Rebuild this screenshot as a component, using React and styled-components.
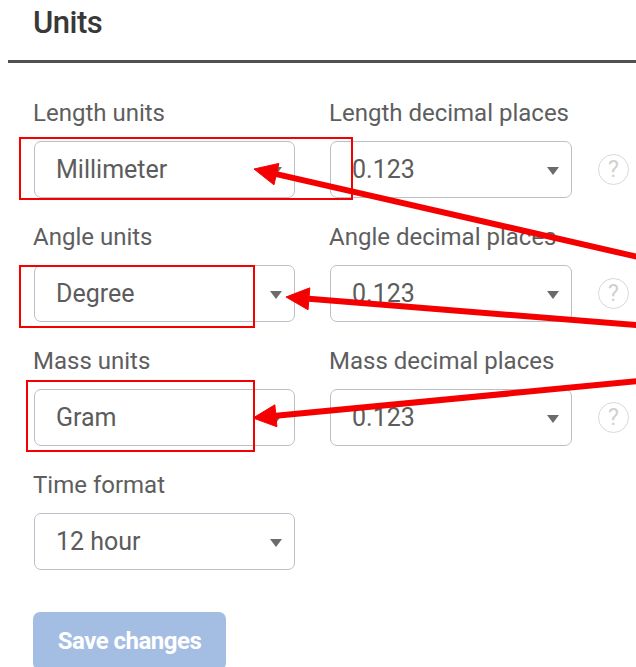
import React from 'react';
import styled, { createGlobalStyle } from 'styled-components';

const GlobalStyle = createGlobalStyle`
  html, body {
    margin: 0;
    padding: 0;
    background: #ffffff;
  }
  body {
    font-family: Roboto, "Liberation Sans", sans-serif;
  }
`;

const fields = [
  { label: 'Length units', value: 'Millimeter', decimalLabel: 'Length decimal places', decimal: '0.123' },
  { label: 'Angle units', value: 'Degree', decimalLabel: 'Angle decimal places', decimal: '0.123' },
  { label: 'Mass units', value: 'Gram', decimalLabel: 'Mass decimal places', decimal: '0.123' },
  { label: 'Time format', value: '12 hour' },
];

// callout marks drawn over the form
const boxes = [
  { x: 20, y: 138, w: 332, h: 61 },
  { x: 20, y: 266, w: 234, h: 61 },
  { x: 27, y: 381, w: 227, h: 70 },
];

const arrows = [
  { tip: [254, 169], tail: [660, 262] },
  { tip: [286, 297], tail: [660, 327] },
  { tip: [253, 418], tail: [660, 379] },
];

const arrowHead = (tip, tail, len = 23, half = 11) => {
  const dx = tail[0] - tip[0];
  const dy = tail[1] - tip[1];
  const d = Math.hypot(dx, dy);
  const ux = dx / d;
  const uy = dy / d;
  const bx = tip[0] + ux * len;
  const by = tip[1] + uy * len;
  return {
    base: [bx, by],
    points: `${tip[0]},${tip[1]} ${bx - uy * half},${by + ux * half} ${bx + uy * half},${by - ux * half}`,
  };
};

const Units = () => {
  return (
    <Page>
      <GlobalStyle />
      <Header>
        <Title>Units</Title>
      </Header>
      <Form>
        {fields.map((f) => (
          <React.Fragment key={f.label}>
            <Field>
              <Label>{f.label}</Label>
              <Select $width={261}>{f.value}</Select>
            </Field>
            {f.decimal ? (
              <>
                <Field>
                  <Label>{f.decimalLabel}</Label>
                  <Select $width={242}>{f.decimal}</Select>
                </Field>
                <Help>?</Help>
              </>
            ) : (
              <>
                <div />
                <div />
              </>
            )}
          </React.Fragment>
        ))}
      </Form>
      <SaveButton>Save changes</SaveButton>

      <Marks width="636" height="667" viewBox="0 0 636 667">
        {boxes.map((b, i) => (
          <rect key={i} x={b.x} y={b.y} width={b.w} height={b.h} fill="none" stroke="#f50000" strokeWidth="2" />
        ))}
        {arrows.map((a, i) => {
          const head = arrowHead(a.tip, a.tail);
          return (
            <g key={i} fill="#f50000" stroke="#f50000">
              <line x1={head.base[0]} y1={head.base[1]} x2={a.tail[0]} y2={a.tail[1]} strokeWidth="6" />
              <polygon points={head.points} strokeWidth="1" />
            </g>
          );
        })}
      </Marks>
    </Page>
  );
};

const Page = styled.div`
  position: relative;
  width: 636px;
  height: 667px;
  overflow: hidden;
  background: #ffffff;
`;

const Header = styled.div`
  margin-left: 8px;
  height: 63px;
  padding: 0 0 15px 25px;
  border-bottom: 3px solid #505050;
  box-sizing: border-box;
  display: flex;
  align-items: center;
`;

const Title = styled.h1`
  margin: 0;
  font-size: 31px;
  font-weight: 500;
  color: #383838;
  letter-spacing: -0.5px;
`;

const Form = styled.div`
  display: grid;
  grid-template-columns: 261px 242px 32px;
  column-gap: 35px;
  row-gap: 24px;
  align-items: end;
  padding: 35px 0 0 34px;
`;

const Field = styled.div`
  display: flex;
  flex-direction: column;
  gap: 13px;
`;

const Label = styled.span`
  font-size: 24px;
  line-height: 30px;
  color: #5e5e5e;
  margin-left: -1px;
`;

const Select = styled.div`
  position: relative;
  width: ${(p) => p.$width}px;
  height: 57px;
  box-sizing: border-box;
  border: 1.5px solid #b9c0c7;
  border-radius: 7px;
  padding-left: 21px;
  display: flex;
  align-items: center;
  font-size: 25px;
  color: #5c5c5c;

  &::after {
    content: '';
    position: absolute;
    right: 12px;
    top: 50%;
    margin-top: -3px;
    border-left: 6px solid transparent;
    border-right: 6px solid transparent;
    border-top: 8px solid #6b6b6b;
  }
`;

const Help = styled.span`
  width: 31px;
  height: 31px;
  margin-bottom: 13px;
  margin-left: -9px;
  border: 1.5px solid #d9d9d9;
  border-radius: 50%;
  box-sizing: border-box;
  display: flex;
  align-items: center;
  justify-content: center;
  font-size: 23px;
  color: #d0d0d0;
`;

const SaveButton = styled.button`
  margin: 42px 0 0 33px;
  width: 193px;
  height: 58px;
  border: none;
  border-radius: 7px;
  background: #a4bde3;
  color: #ffffff;
  font-family: Roboto, "Liberation Sans", sans-serif;
  font-size: 24px;
  font-weight: 700;
  letter-spacing: -0.5px;
  padding: 0;
  display: flex;
  align-items: center;
  justify-content: center;
`;

const Marks = styled.svg`
  position: absolute;
  left: 0;
  top: 0;
  pointer-events: none;
`;

export default Units;
